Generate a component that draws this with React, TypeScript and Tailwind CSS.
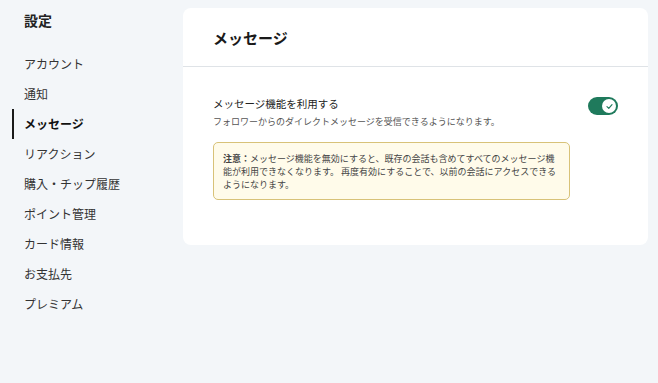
import React from "react";

const items = [
  "アカウント",
  "通知",
  "メッセージ",
  "リアクション",
  "購入・チップ履歴",
  "ポイント管理",
  "カード情報",
  "お支払先",
  "プレミアム",
];

export default function App() {
  return (
    <div
      className="w-[658px] h-[383px] bg-[#f3f6f9] flex text-[#222]"
      style={{ fontFamily: '"Noto Sans CJK JP", "Noto Sans", sans-serif' }}
    >
      <div className="w-[183px] shrink-0 pt-[10px]">
        <div className="pl-[24px] h-[20px] leading-[20px] text-[14px] font-bold">設定</div>
        <div className="mt-[19px] flex flex-col">
          {items.map((it) => {
            const active = it === "メッセージ";
            return (
              <div key={it} className="relative h-[30px] flex items-center pl-[24px]">
                {active && <div className="absolute left-[12px] top-0 bottom-0 w-[2px] bg-[#1a1a1a]" />}
                <span className={active ? "text-[12px] font-bold text-[#111]" : "text-[12px] text-[#333]"}>{it}</span>
              </div>
            );
          })}
        </div>
      </div>
      <div className="mt-[8px] w-[465px] h-[237px] bg-white rounded-[8px]">
        <div className="h-[59px] border-b border-[#dfe3e7] flex items-center pl-[30px] pt-[2px]">
          <span className="text-[15px] font-bold text-[#1a1a1a]">メッセージ</span>
        </div>
        <div className="pl-[30px] pr-[30px] pt-[29px]">
          <div className="flex items-start justify-between">
            <div>
              <div className="text-[10.5px] leading-[16px] text-[#222]">メッセージ機能を利用する</div>
              <div className="text-[9px] leading-[14px] mt-[3px] text-[#555]">
                フォロワーからのダイレクトメッセージを受信できるようになります。
              </div>
            </div>
            <div className="mt-[1px] w-[30px] h-[18px] rounded-full bg-[#1f7a5c] flex items-center justify-end pr-[2px]">
              <div className="w-[14px] h-[14px] rounded-full bg-white flex items-center justify-center">
                <svg width="9" height="9" viewBox="0 0 10 10" fill="none">
                  <path d="M2.2 5.2 L4.2 7.1 L7.8 3" stroke="#1f7a5c" strokeWidth="1.3" strokeLinecap="round" strokeLinejoin="round" />
                </svg>
              </div>
            </div>
          </div>
          <div className="mt-[13px] w-[357px] rounded-[5px] border border-[#d8c278] bg-[#fffbea] px-[9px] pt-[9px] pb-[8px] text-[9px] leading-[13px] text-[#444]">
            <p>
              <b>注意：</b>メッセージ機能を無効にすると、既存の会話も含めてすべてのメッセージ機能が利用できなくなります。 再度有効にすることで、以前の会話にアクセスできるようになります。
            </p>
          </div>
        </div>
      </div>
    </div>
  );
}
